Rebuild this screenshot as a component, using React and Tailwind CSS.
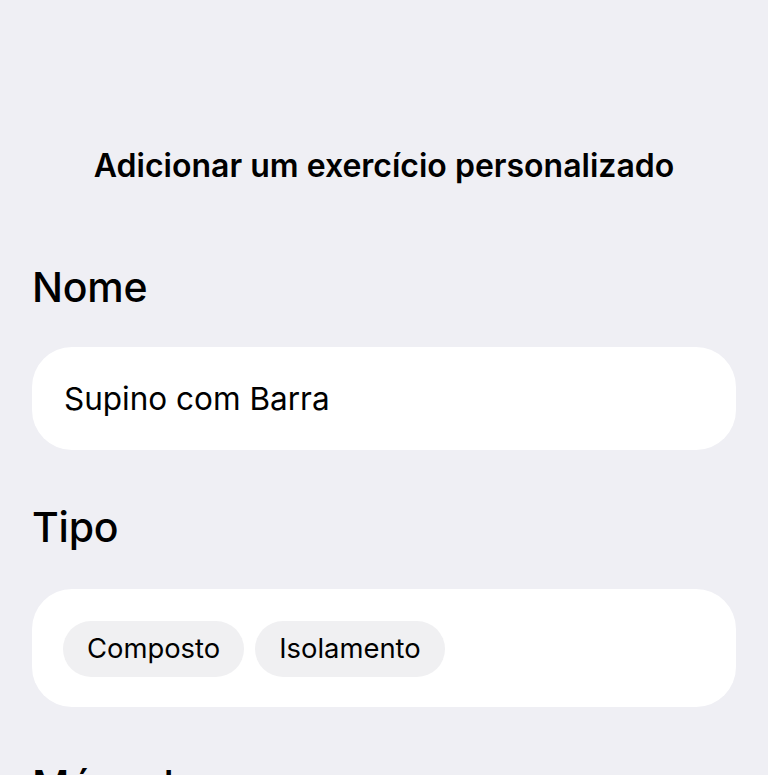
import React from "react";

const font = { fontFamily: "Inter, 'Noto Sans', sans-serif" };

const Label = ({ children, className = "" }) => (
  <h2 className={`text-[41px] leading-[48px] font-medium text-black tracking-[-0.2px] ${className}`}>
    {children}
  </h2>
);

const Chip = ({ children }) => (
  <button
    type="button"
    className="h-14 px-6 rounded-full bg-[#f0f0f2] text-[27.4px] leading-none text-black"
  >
    {children}
  </button>
);

export default function App() {
  return (
    <div className="min-h-screen bg-[#efeff4] px-8 overflow-hidden" style={font}>
      {/* Header */}
      <h1 className="pt-[146px] text-center text-[32px] leading-[40px] font-semibold text-black">
        Adicionar um exercício personalizado
      </h1>

      {/* Nome */}
      <Label className="mt-[77px]">Nome</Label>
      <div className="mt-[36px] h-[103px] rounded-[40px] bg-white px-8 flex items-center">
        <span className="text-[31.5px] text-black">Supino com Barra</span>
      </div>

      {/* Tipo */}
      <Label className="mt-[53px]">Tipo</Label>
      <div className="mt-[38px] rounded-[40px] bg-white pl-[31px] pt-[32px] pb-[30px] flex gap-[11px]">
        <Chip>Composto</Chip>
        <Chip>Isolamento</Chip>
      </div>

      {/* Músculos */}
      <Label className="mt-[54px]">Músculos</Label>
    </div>
  );
}
